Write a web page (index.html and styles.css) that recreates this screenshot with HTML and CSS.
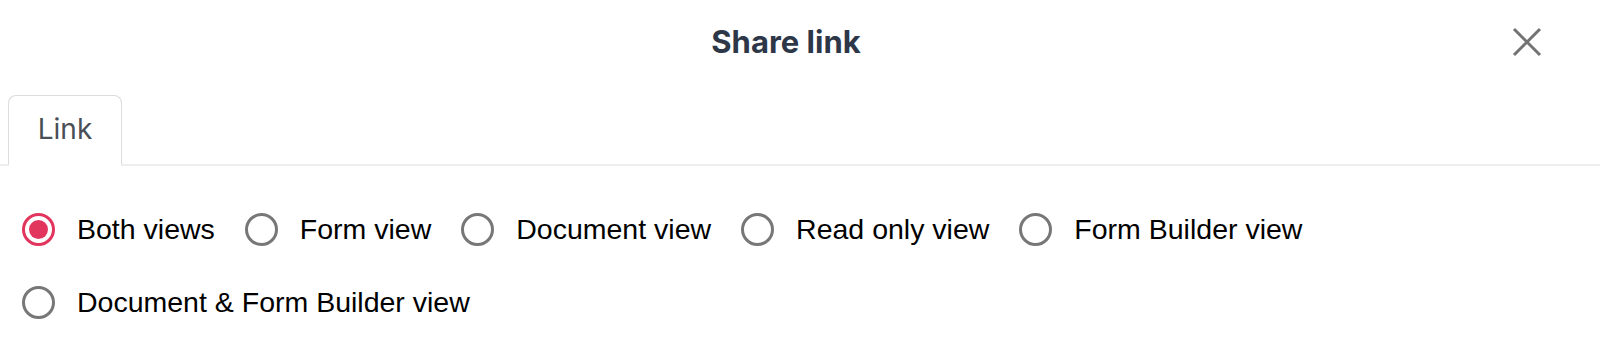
FILE: index.html
```html
<!DOCTYPE html>
<html>
<head>
<meta charset="utf-8">
<link rel="stylesheet" href="styles.css">
</head>
<body>
<div class="dialog">
  <header class="header">
    <h1 class="title">Share link</h1>
    <button class="close" aria-label="Close">
      <svg viewBox="0 0 30 30" width="30" height="30"><path d="M2 2 L28 28 M28 2 L2 28" stroke="#737373" stroke-width="3" fill="none"/></svg>
    </button>
  </header>
  <nav class="tabs">
    <div class="tab">Link</div>
  </nav>
  <div class="options">
    <label class="option"><span class="radio checked"></span><span class="label">Both views</span></label>
    <label class="option"><span class="radio"></span><span class="label">Form view</span></label>
    <label class="option"><span class="radio"></span><span class="label">Document view</span></label>
    <label class="option"><span class="radio"></span><span class="label">Read only view</span></label>
    <label class="option"><span class="radio"></span><span class="label">Form Builder view</span></label>
    <label class="option"><span class="radio"></span><span class="label">Document &amp; Form Builder view</span></label>
  </div>
</div>
</body>
</html>
```
FILE: styles.css
```css
* { box-sizing: border-box; }
html, body { margin: 0; padding: 0; background: #fff; }
body { width: 1600px; height: 364px; overflow: hidden; }
.dialog { position: relative; }
.header {
  height: 82px;
  padding-right: 28px;
  display: flex;
  align-items: center;
  justify-content: center;
}
.title {
  margin: 0;
  font-family: Inter, "Noto Sans", sans-serif;
  font-weight: 700;
  font-size: 31px;
  color: #2d3748;
  letter-spacing: 0;
}
.close {
  position: absolute;
  right: 58px;
  top: 27px;
  padding: 0;
  border: 0;
  background: none;
  width: 30px;
  height: 30px;
}
.close svg { display: block; }
.tabs {
  margin-top: 13px;
  padding-left: 8px;
  border-bottom: 2px solid #eeeef0;
  display: flex;
}
.tab {
  width: 114px;
  height: 71px;
  margin-bottom: -2px;
  border: 1px solid #dcdcdf;
  border-bottom: 2px solid #fff;
  border-radius: 8px 8px 0 0;
  display: flex;
  align-items: center;
  justify-content: center;
  font-family: Inter, "Noto Sans", sans-serif;
  font-size: 28px;
  color: #4a4f57;
  padding-bottom: 2px;
}
.options {
  padding: 47px 0 0 22px;
  display: flex;
  flex-wrap: wrap;
  row-gap: 40px;
  width: 1400px;
}
.option {
  display: flex;
  align-items: center;
  height: 33px;
  margin-right: 30px;
  font-family: "Liberation Sans", Arial, sans-serif;
  font-size: 28.5px;
  color: #000;
}
.radio {
  width: 33px;
  height: 33px;
  border: 3px solid #777;
  border-radius: 50%;
  margin-right: 22px;
  display: flex;
  align-items: center;
  justify-content: center;
  flex: none;
}
.radio.checked { border-color: #e2355e; }
.radio.checked::after {
  content: "";
  width: 19px;
  height: 19px;
  border-radius: 50%;
  background: #e2355e;
}
```
